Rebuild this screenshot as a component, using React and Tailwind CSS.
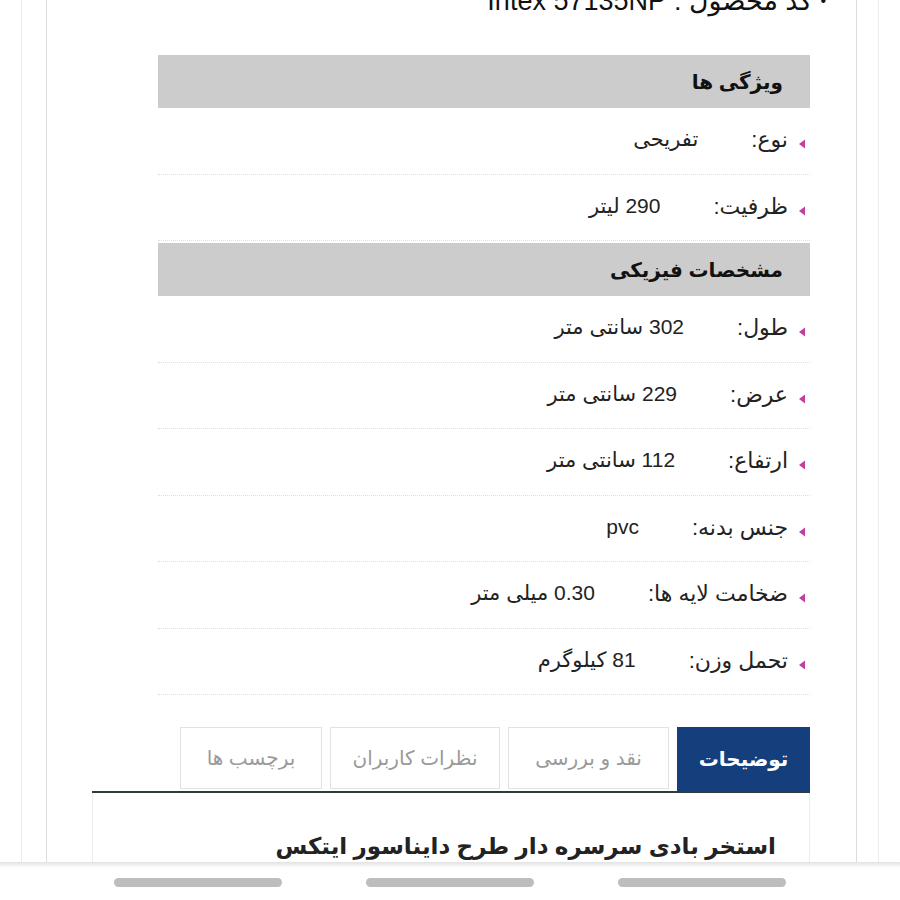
const features = [
  { label: 'نوع:', value: 'تفریحی' },
  { label: 'ظرفیت:', value: '290 لیتر' },
]

const physical = [
  { label: 'طول:', value: '302 سانتی متر' },
  { label: 'عرض:', value: '229 سانتی متر' },
  { label: 'ارتفاع:', value: '112 سانتی متر' },
  { label: 'جنس بدنه:', value: 'pvc' },
  { label: 'ضخامت لایه ها:', value: '0.30 میلی متر' },
  { label: 'تحمل وزن:', value: '81 کیلوگرم' },
]

const tabs = [
  { label: 'توضیحات', w: 'w-[133px]', active: true },
  { label: 'نقد و بررسی', w: 'w-[161px]' },
  { label: 'نظرات کاربران', w: 'w-[170px]' },
  { label: 'برچسب ها', w: 'w-[142px]' },
]

function Row({ label, value }) {
  return (
    <div className="h-[66.5px] flex items-start pt-[15px] pr-[4px] border-b border-dotted border-[#dedede] text-[21px] text-[#222]">
      <svg width="8" height="12" viewBox="0 0 8 12" className="mt-[15px] ml-[10px] shrink-0">
        <polygon points="1,6 7,1.5 7,10.5" fill="#c23ea3" />
      </svg>
      <span className="text-[22px]">{label}</span>
      <span className="mr-[53px]">{value}</span>
    </div>
  )
}

function SectionHeader({ children }) {
  return (
    <div className="h-[53px] bg-[#cccccc] flex items-center pr-[27px] text-[20px] font-bold text-[#111]">
      {children}
    </div>
  )
}

export default function App() {
  return (
    <div
      dir="rtl"
      className="relative w-[900px] h-[900px] overflow-hidden bg-white"
      style={{ fontFamily: '"Liberation Sans", "DejaVu Sans", sans-serif' }}
    >
      <div className="h-full ml-[21px] mr-[21px] border-x border-[#ececec]">
        <div className="h-full mr-[21px] ml-[24px] border-x border-[#dcdcdc]">
          <div className="h-[18px] flow-root">
            <div className="mt-[-15px] pr-[30px] text-[27px] leading-[32px] text-[#111] flex items-center gap-[8px] whitespace-nowrap">
              <span className="text-[16px]">•</span>
              <span>کد محصول : </span>
              <span dir="ltr">Intex 57135NP</span>
            </div>
          </div>

          <div className="mt-[37px] mr-[46px] ml-[111px]">
            <SectionHeader>ویژگی ها</SectionHeader>
            {features.map(f => <Row key={f.label} {...f} />)}
            <div className="mt-[2px]">
              <SectionHeader>مشخصات فیزیکی</SectionHeader>
            </div>
            {physical.map(f => <Row key={f.label} {...f} />)}
          </div>

          <div className="mt-[32px] mr-[46px] ml-[45px]">
            <div className="flex gap-[8px] items-end">
              {tabs.map(t => (
                <div
                  key={t.label}
                  className={t.active
                    ? `${t.w} h-[64px] bg-[#143f7c] text-white font-bold text-[20px] flex items-center justify-center`
                    : `${t.w} h-[62px] mb-[2px] border border-[#e2e2e2] text-[#9a9a9a] text-[20px] flex items-center justify-center`}
                >
                  {t.label}
                </div>
              ))}
            </div>
            <div className="h-[2px] bg-[#2f3b3b]" />
            <div className="h-[200px] border-x border-[#ececec] pr-[33px] pt-[36px]">
              <h2 className="text-[23px] font-bold text-[#222]">استخر بادی سرسره دار طرح دایناسور ایتکس</h2>
            </div>
          </div>
        </div>
      </div>

      <div className="absolute left-0 right-0 bottom-0 h-[38px] bg-white">
        <div className="h-[6px] bg-gradient-to-b from-[#e2e2e2] to-white" />
        <div className="flex justify-center gap-[84px] mt-[10px]" dir="ltr">
          <div className="w-[168px] h-[9px] rounded-full bg-[#bdbdbd]" />
          <div className="w-[168px] h-[9px] rounded-full bg-[#bdbdbd]" />
          <div className="w-[168px] h-[9px] rounded-full bg-[#bdbdbd]" />
        </div>
      </div>
    </div>
  )
}
